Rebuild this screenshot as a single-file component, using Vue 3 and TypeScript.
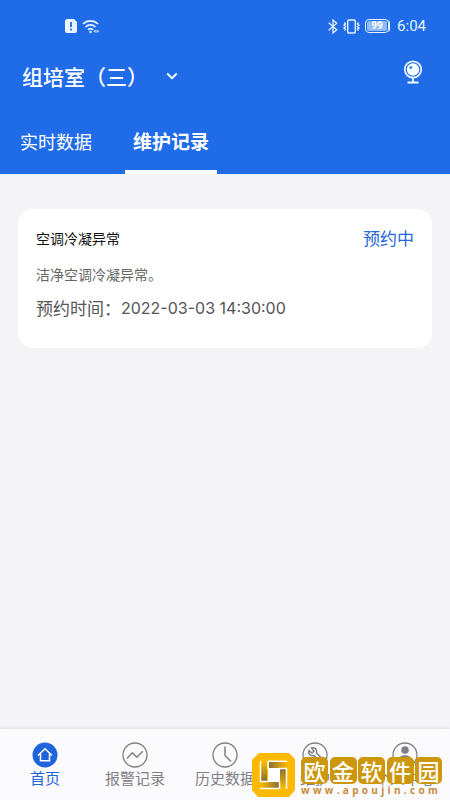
<script setup lang="ts">
import { ref } from 'vue'

interface MaintenanceRecord {
  title: string
  status: string
  description: string
  time: string
}

const tabs: string[] = ['实时数据', '维护记录']
const activeTab = ref(1)

const records: MaintenanceRecord[] = [
  { title: '空调冷凝异常', status: '预约中', description: '洁净空调冷凝异常。', time: '2022-03-03 14:30:00' },
]

const navItems = [
  { id: 'home', label: '首页' },
  { id: 'alarm', label: '报警记录' },
  { id: 'history', label: '历史数据' },
  { id: 'repair', label: '维护' },
  { id: 'user', label: '个人中心' },
]
const activeNav = ref('home')

const brandName = [...'欧金软件园']
const brandUrl = [...'www.apoujin.com']
</script>

<template>
  <div class="app">
    <header class="header">
      <div class="status-bar">
        <div class="status-group">
          <svg width="12" height="14" viewBox="0 0 12 14">
            <path d="M3 0h6l3 3v9a2 2 0 0 1-2 2H2a2 2 0 0 1-2-2V2.500a2.500 2.500 0 0 1 3-2.500z" fill="#eaf5ff" />
            <path d="M6 3v5M6 9.500v2" stroke="#1f6be8" stroke-width="1.800" />
          </svg>
          <svg width="18" height="15" viewBox="0 0 18 15" fill="none" stroke="#e4f3ff" stroke-width="1.700">
            <path d="M1 5a10.500 10.500 0 0 1 15 0M3.500 8a7 7 0 0 1 10 0M6 10.800a3.700 3.700 0 0 1 5 0" />
            <circle cx="8.500" cy="13" r="1.200" fill="#e4f3ff" stroke="none" />
            <path d="M13.500 10.500l-2 1.700 2 1.700zM14.700 10.500l2.300 1.700-2.300 1.700z" fill="#e4f3ff" stroke="none" />
          </svg>
        </div>
        <div class="status-group">
          <svg width="10" height="15" viewBox="0 0 10 15" fill="none" stroke="#e4f3ff" stroke-width="1.300">
            <path d="M.7 3.700l8 7L5 14V1l3.700 3.200-8 7" />
          </svg>
          <svg width="17" height="15" viewBox="0 0 17 15" fill="none" stroke="#e4f3ff" stroke-width="1.400">
            <rect x="4.700" y="1" width="7.600" height="13" rx="1" />
            <path d="M1.500 3.500l1 1.300-1.500 1.400 1.500 1.300-1.500 1.400 1.500 1.300-1 1.500M15.500 3.500l-1 1.300 1.500 1.400-1.500 1.300 1.500 1.400-1.500 1.300 1 1.500" />
          </svg>
          <div class="battery"><span class="battery-level">99</span></div>
          <span class="clock">6:04</span>
        </div>
      </div>

      <div class="title-bar">
        <button class="room" type="button">
          <span>组培室（三）</span>
          <svg width="12" height="8" viewBox="0 0 12 8" fill="none" stroke="#fff" stroke-width="1.800">
            <path d="M1.200 1.500L6 6.200l4.800-4.700" />
          </svg>
        </button>
        <button class="camera" type="button" aria-label="摄像头">
          <svg width="20" height="24" viewBox="0 0 20 24" fill="none" stroke="#f2fbff">
            <circle cx="10" cy="9.500" r="8.200" stroke-width="1.700" />
            <circle cx="10" cy="9.500" r="6.200" fill="#f2fbff" stroke="none" />
            <circle cx="7.800" cy="7.500" r="1.300" fill="#1f6be8" stroke="none" />
            <path d="M10 18v4M4.500 22.500h11" stroke-width="1.800" />
          </svg>
        </button>
      </div>

      <nav class="tabs">
        <button
          v-for="(tab, i) in tabs"
          :key="tab"
          type="button"
          class="tab"
          :class="{ active: i === activeTab }"
          @click="activeTab = i"
        >{{ tab }}</button>
      </nav>
    </header>

    <main class="content">
      <article v-for="record in records" :key="record.time" class="card">
        <div class="card-head">
          <h2 class="card-title">{{ record.title }}</h2>
          <span class="card-status">{{ record.status }}</span>
        </div>
        <p class="card-desc">{{ record.description }}</p>
        <p class="card-time"><span>预约时间：</span><time class="stamp">{{ record.time }}</time></p>
      </article>
    </main>

    <footer class="footer">
      <nav class="bottom-nav">
        <button
          v-for="item in navItems"
          :key="item.id"
          type="button"
          class="nav-item"
          :class="{ active: item.id === activeNav }"
          @click="activeNav = item.id"
        >
          <svg class="nav-icon" width="26" height="26" viewBox="0 0 26 26" fill="none" stroke="currentColor" stroke-width="1.300">
            <template v-if="item.id === 'home'">
              <circle cx="13" cy="13" r="12.500" fill="currentColor" stroke="none" />
              <path d="M6 13.500l7-6.800 7 6.800M8.500 12v6.800h9V12" stroke="#fff" stroke-width="1.500" />
            </template>
            <template v-else>
              <circle cx="13" cy="13" r="12" />
              <path v-if="item.id === 'alarm'" d="M5 16.500l5.200-5.700 4.600 4.500 6-6" stroke-width="1.500" />
              <path v-else-if="item.id === 'history'" d="M13 4.500v9l6 6" stroke-width="1.500" />
              <path v-else-if="item.id === 'repair'" d="M7 8.500l3 2.500 2-2-2.500-3c3-1 6 1 5 5l5.500 5.500-2.500 2.500-5.500-5.500c-4 1-6-2-5-5z" stroke-width="1.500" />
              <template v-else>
                <circle cx="13" cy="8" r="3.800" fill="currentColor" stroke="none" />
                <path d="M5.500 20c0-9 15-9 15 0a10 10 0 0 1-15 0z" fill="currentColor" stroke="none" />
              </template>
            </template>
          </svg>
          <span>{{ item.label }}</span>
        </button>
      </nav>

      <div class="brand">
        <svg width="43" height="44" viewBox="0 0 43 44">
          <defs>
            <linearGradient id="shadeRight"><stop offset="0" stop-color="#857036" /><stop offset="1" stop-color="#fbb900" /></linearGradient>
            <linearGradient id="shadeLeft"><stop offset="0" stop-color="#fbb900" /><stop offset="1" stop-color="#857036" /></linearGradient>
            <linearGradient id="shadeDown" x2="0" y2="1"><stop offset="0" stop-color="#857036" /><stop offset="1" stop-color="#fbb900" /></linearGradient>
            <linearGradient id="shadeUp" x2="0" y2="1"><stop offset="0" stop-color="#fbb900" /><stop offset="1" stop-color="#857036" /></linearGradient>
          </defs>
          <path d="M7 0h30l6 6v31l-6 7H6l-6-7V7z" fill="#fbb900" />
          <path d="M16 15h12v14H16z" fill="#fff" />
          <path d="M17 9h18v6H17z" fill="url(#shadeRight)" />
          <path d="M28 16h6v19h-6z" fill="url(#shadeDown)" />
          <path d="M9 29h18v6H9z" fill="url(#shadeLeft)" />
          <path d="M9 9h6v19H9z" fill="url(#shadeUp)" />
          <path d="M8.500 29V8M16 8.300h19M34.500 15v21M8 35.500h19M16 8v8M27 15.500h8M27.500 28v8M8 28.500h9" fill="none" stroke="#fff" stroke-width="1.500" />
        </svg>
        <div class="brand-text">
          <div class="brand-name"><span v-for="(char, i) in brandName" :key="i" class="seal">{{ char }}</span></div>
          <div class="brand-url"><span v-for="(char, i) in brandUrl" :key="i">{{ char }}</span></div>
        </div>
      </div>
    </footer>
  </div>
</template>

<style>
body {
  margin: 0;
  background: #f4f3f6;
}
</style>

<style scoped>
.app {
  display: flex;
  flex-direction: column;
  min-height: 100vh;
  font-family: "Noto Sans CJK SC", sans-serif;
  color: #555;
}

button {
  padding: 0;
  border: 0;
  background: none;
  color: inherit;
  font: inherit;
  cursor: pointer;
}

svg {
  display: block;
}

.header {
  background: #1f6be8;
  color: #fff;
}

.status-bar {
  display: flex;
  align-items: center;
  justify-content: space-between;
  height: 52px;
  padding: 0 24px 0 65px;
}

.status-group {
  display: flex;
  align-items: center;
  gap: 5px;
}

.battery {
  display: flex;
  box-sizing: border-box;
  width: 24px;
  height: 14px;
  padding: 1px;
  border: 1px solid #e4f3ff;
  border-radius: 4px;
  margin-right: 3px;
  box-shadow: 2px 0 0 -1px #e4f3ff;
}

.battery-level {
  flex: 1;
  border-radius: 2px;
  background: #8fbcf6;
  font: bold 10px/10px Roboto, sans-serif;
  text-align: center;
}

.clock {
  color: #e4f3ff;
  font: 15px/20px Roboto, sans-serif;
}

.title-bar {
  display: flex;
  align-items: flex-start;
  justify-content: space-between;
  height: 60px;
  padding: 0 27px 0 22px;
}

.room {
  display: flex;
  align-items: center;
  gap: 18px;
  padding-top: 8px;
  font-size: 21px;
  font-weight: 500;
  line-height: 32px;
}

.camera {
  padding-top: 8px;
}

.tabs {
  display: flex;
  gap: 25px;
  padding-left: 12px;
}

.tab {
  box-sizing: border-box;
  height: 62px;
  padding: 0 8px;
  border-bottom: 4px solid transparent;
  font-size: 18px;
  line-height: 58px;
}

.tab.active {
  border-color: #fff;
  font-size: 19px;
  font-weight: 700;
}

.content {
  flex: 1;
  padding: 35px 18px;
}

.card {
  padding: 14px 18px 26px;
  border-radius: 15px;
  background: #fff;
}

.card-head {
  display: flex;
  align-items: center;
  justify-content: space-between;
}

.card-title {
  margin: 0;
  color: #111;
  font-size: 14px;
  font-weight: 400;
  line-height: 30px;
}

.card-status {
  color: #2468d8;
  font-size: 17px;
  line-height: 30px;
}

.card-desc {
  margin: 9px 0 8px;
  font-size: 14px;
  line-height: 24px;
  color: #666;
}

.card-time {
  display: flex;
  align-items: center;
  margin: 0;
  font-size: 17px;
  line-height: 28px;
}

.stamp {
  font-family: Inter, sans-serif;
  font-size: 16px;
}

.footer {
  position: relative;
  background: #fbfafd;
  box-shadow: 0 -1px 3px #dddde2;
}

.bottom-nav {
  display: grid;
  grid-template-columns: repeat(5, 1fr);
  height: 71px;
}

.nav-item {
  display: flex;
  flex-direction: column;
  align-items: center;
  padding-top: 13px;
  color: #808084;
  font-size: 15px;
  line-height: 20px;
  white-space: nowrap;
}

.nav-item.active {
  color: #1f64dc;
}

.brand {
  position: absolute;
  right: 8px;
  bottom: 3px;
  display: flex;
  align-items: flex-end;
  gap: 6px;
  pointer-events: none;
}

.brand-text {
  width: 141px;
}

.brand-name,
.brand-url {
  display: flex;
  justify-content: space-between;
}

.seal {
  width: 27px;
  height: 27px;
  border-radius: 5px;
  background: #cc960d;
  color: #fff;
  font-size: 22px;
  font-weight: 500;
  line-height: 26px;
  text-align: center;
}

.brand-url {
  padding-right: 4px;
  color: #c88b3c;
  font: bold 10px/13px "Open Sans", sans-serif;
}
</style>
